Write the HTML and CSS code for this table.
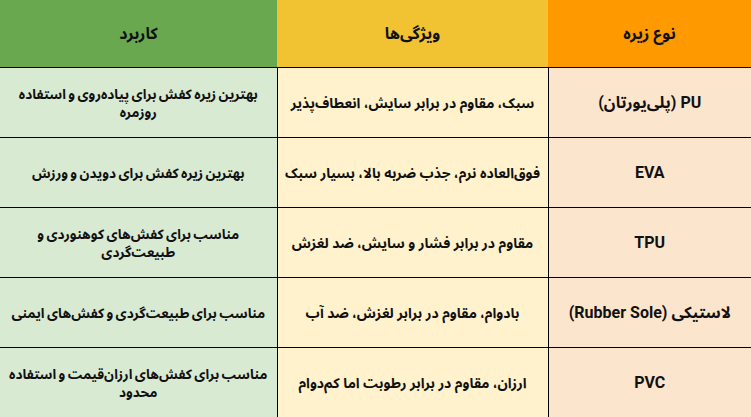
FILE: index.html
```html
<!DOCTYPE html>
<html lang="fa" dir="rtl">
<head>
<meta charset="utf-8">
<link rel="stylesheet" href="styles.css">
</head>
<body>
<table class="soles">
  <colgroup>
    <col class="c-type">
    <col class="c-feat">
    <col class="c-use">
  </colgroup>
  <thead>
    <tr>
      <th class="h-type">نوع زیره</th>
      <th class="h-feat">ویژگی‌ها</th>
      <th class="h-use">کاربرد</th>
    </tr>
  </thead>
  <tbody>
    <tr>
      <td class="type">PU (پلی‌یورتان)</td>
      <td class="feat">سبک، مقاوم در برابر سایش، انعطاف‌پذیر</td>
      <td class="use">بهترین زیره کفش برای پیاده‌روی و استفاده روزمره</td>
    </tr>
    <tr>
      <td class="type">EVA</td>
      <td class="feat">فوق‌العاده نرم، جذب ضربه بالا، بسیار سبک</td>
      <td class="use">بهترین زیره کفش برای دویدن و ورزش</td>
    </tr>
    <tr>
      <td class="type">TPU</td>
      <td class="feat">مقاوم در برابر فشار و سایش، ضد لغزش</td>
      <td class="use">مناسب برای کفش‌های کوهنوردی و طبیعت‌گردی</td>
    </tr>
    <tr>
      <td class="type">لاستیکی (Rubber Sole)</td>
      <td class="feat">بادوام، مقاوم در برابر لغزش، ضد آب</td>
      <td class="use">مناسب برای طبیعت‌گردی و کفش‌های ایمنی</td>
    </tr>
    <tr>
      <td class="type">PVC</td>
      <td class="feat">ارزان، مقاوم در برابر رطوبت اما کم‌دوام</td>
      <td class="use">مناسب برای کفش‌های ارزان‌قیمت و استفاده محدود</td>
    </tr>
  </tbody>
</table>
</body>
</html>
```

FILE: styles.css
```css
html, body {
  margin: 0;
  padding: 0;
  background: #ffffff;
}

.soles {
  width: 751px;
  border-collapse: collapse;
  table-layout: fixed;
  font-family: Roboto, "Noto Sans Arabic", sans-serif;
  font-weight: bold;
  color: #111111;
}

.c-type { width: 203px; }
.c-feat { width: 271px; }
.c-use { width: 277px; }

.soles th {
  height: 67px;
  font-size: 16px;
  font-weight: bold;
  text-align: center;
  border-bottom: 1px solid #000;
  padding: 0 8px;
}

.h-type { background: #ff9900; }
.h-feat { background: #f1c232; }
.h-use { background: #6aa84f; }

.soles td {
  height: 69px;
  font-size: 14px;
  line-height: 18px;
  text-align: center;
  border: 1px solid #000;
  padding: 0 3px;
}

.soles tr td:first-child { border-right: none; }
.soles tr td:last-child { border-left: none; }
.soles tbody tr:last-child td { border-bottom: none; }

.soles td.type { background: #fce5cd; font-size: 16px; }
.feat { background: #fff2cc; }
.soles td.use {
  background: #d9ead3;
  font-size: 13.6px;
  word-spacing: -1px;
  padding: 0 2px;
}
```
